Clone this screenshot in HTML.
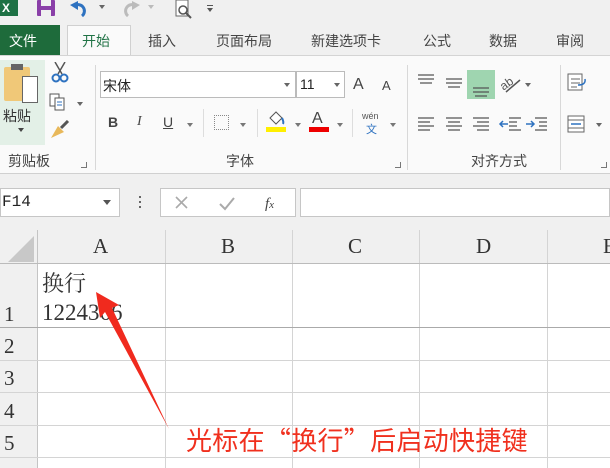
<!DOCTYPE html>
<html><head><meta charset="utf-8"><style>
*{margin:0;padding:0;box-sizing:border-box}
body{width:610px;height:468px;overflow:hidden;background:#f0f0f0;font-family:"Liberation Sans","Noto Sans CJK SC",sans-serif;position:relative;color:#333}
.a{position:absolute}
.tab{position:absolute;top:31px;font-size:14px;color:#444}
.lbl{position:absolute;top:151px;font-size:14px;color:#444}
.sep{position:absolute;top:65px;width:1px;height:105px;background:#d8d8d8}
.hl{position:absolute;left:0;width:610px;height:1px;background:#c8c8c8}
.vl{position:absolute;top:230px;width:1px;height:238px;background:#d4d4d4}
.ch{position:absolute;top:234px;font-family:"Liberation Serif","Noto Serif CJK SC",serif;font-size:21px;color:#333}
.rh{position:absolute;left:4px;font-family:"Liberation Serif","Noto Serif CJK SC",serif;font-size:21px;color:#333}
</style></head><body>
<div class="a" style="left:0;top:0;width:18px;height:16px;background:#1e7145"></div>
<div class="a" style="left:2px;top:1px;color:#fff;font-size:12px;font-weight:bold">X</div>
<div class="a" style="left:37px;top:0;width:18px;height:16px;background:#8a3fa8;border-radius:1px"></div>
<div class="a" style="left:41px;top:0;width:10px;height:6px;background:#f0f0f0"></div>
<div class="a" style="left:41px;top:10px;width:10px;height:6px;background:#f0f0f0"></div>
<svg class="a" style="left:70px;top:0" width="40" height="18"><path d="M4 6 A6 6 0 1 1 12 16" stroke="#2e72c0" stroke-width="3" fill="none"/><path d="M0 5 L8 1 L8 10Z" fill="#2e72c0"/><path d="M29 5 L35 5 L32 9Z" fill="#666"/></svg>
<svg class="a" style="left:120px;top:0" width="40" height="18"><path d="M16 6 A6 6 0 1 0 8 16" stroke="#bbb" stroke-width="3" fill="none"/><path d="M20 5 L12 1 L12 10Z" fill="#bbb"/><path d="M28 5 L34 5 L31 9Z" fill="#bbb"/></svg>
<svg class="a" style="left:174px;top:0" width="20" height="20"><rect x="2" y="0" width="12" height="16" fill="#fff" stroke="#666"/><circle cx="9" cy="10" r="4" fill="none" stroke="#555" stroke-width="1.5"/><path d="M12 13 L17 18" stroke="#555" stroke-width="2"/></svg>
<div class="a" style="left:207px;top:5px;width:6px;height:1px;background:#555"></div>
<div class="a" style="left:207px;top:8px;border-left:3px solid transparent;border-right:3px solid transparent;border-top:4px solid #555"></div>
<div class="a" style="left:0;top:25px;width:60px;height:31px;background:#1e6b3b"></div>
<div class="tab" style="left:9px;color:#fff">文件</div>
<div class="a" style="left:67px;top:25px;width:64px;height:31px;background:#fafafa;border:1px solid #d0d0d0;border-bottom:none"></div>
<div class="tab" style="left:82px;color:#217346">开始</div>
<div class="tab" style="left:148px">插入</div>
<div class="tab" style="left:216px">页面布局</div>
<div class="tab" style="left:311px">新建选项卡</div>
<div class="tab" style="left:423px">公式</div>
<div class="tab" style="left:489px">数据</div>
<div class="tab" style="left:556px">审阅</div>
<div class="a" style="left:0;top:55px;width:610px;height:119px;background:#fafafa;border-top:1px solid #d4d4d4;border-bottom:1px solid #d0d0d0"></div>
<div class="a" style="left:131px;top:55px;width:479px;height:1px;background:#d4d4d4"></div>
<div class="a" style="left:0;top:60px;width:45px;height:85px;background:#e3f0e7"></div>
<div class="a" style="left:4px;top:67px;width:26px;height:34px;background:#f0c878;border-radius:2px"></div>
<div class="a" style="left:11px;top:64px;width:12px;height:6px;background:#666"></div>
<div class="a" style="left:22px;top:76px;width:16px;height:27px;background:#fff;border:1px solid #666"></div>
<div class="a" style="left:3px;top:106px;font-size:14px;color:#333">粘贴</div>
<div class="a" style="left:18px;top:128px;border-left:3px solid transparent;border-right:3px solid transparent;border-top:4px solid #444"></div>
<svg class="a" style="left:50px;top:62px" width="20" height="22"><path d="M5 0 L12 12 M15 0 L8 12" stroke="#555" stroke-width="1.5"/><circle cx="6" cy="16" r="3.5" fill="none" stroke="#2e72c0" stroke-width="2"/><circle cx="14" cy="16" r="3.5" fill="none" stroke="#2e72c0" stroke-width="2"/></svg>
<svg class="a" style="left:49px;top:93px" width="34" height="18"><rect x="1" y="1" width="9" height="12" fill="#fff" stroke="#555"/><rect x="6" y="5" width="9" height="12" fill="#fff" stroke="#555"/><path d="M8 9h5M8 12h5" stroke="#2e72c0"/><path d="M28 9 L34 9 L31 13Z" fill="#666"/></svg>
<svg class="a" style="left:49px;top:120px" width="22" height="20"><path d="M12 8 L19 1" stroke="#555" stroke-width="3"/><path d="M2 18 L9 6 L15 12 Z" fill="#e8b85a"/></svg>
<div class="lbl" style="left:8px">剪贴板</div>
<div class="a" style="left:81px;top:162px;width:6px;height:6px;border-right:1px solid #777;border-bottom:1px solid #777"></div>
<div class="sep" style="left:95px"></div>
<div class="a" style="left:100px;top:71px;width:196px;height:27px;background:#fff;border:1px solid #bbb"></div>
<div class="a" style="left:103px;top:76px;font-size:14px;color:#222">宋体</div>
<div class="a" style="left:284px;top:83px;border-left:3px solid transparent;border-right:3px solid transparent;border-top:4px solid #666"></div>
<div class="a" style="left:296px;top:71px;width:49px;height:27px;background:#fff;border:1px solid #bbb"></div>
<div class="a" style="left:300px;top:76px;font-size:14px;color:#222">11</div>
<div class="a" style="left:334px;top:83px;border-left:3px solid transparent;border-right:3px solid transparent;border-top:4px solid #666"></div>
<div class="a" style="left:353px;top:76px;font-size:16px;color:#444">A</div>
<div class="a" style="left:382px;top:78px;font-size:13px;color:#444">A</div>
<div class="a" style="left:108px;top:114px;font-size:14px;font-weight:bold;color:#444">B</div>
<div class="a" style="left:137px;top:114px;font-size:14px;font-style:italic;font-family:'Liberation Serif',serif;color:#444">I</div>
<div class="a" style="left:163px;top:114px;font-size:14px;text-decoration:underline;color:#444">U</div>
<div class="a" style="left:187px;top:123px;border-left:3px solid transparent;border-right:3px solid transparent;border-top:4px solid #777"></div>
<div class="a" style="left:203px;top:109px;width:1px;height:28px;background:#ddd"></div>
<div class="a" style="left:214px;top:115px;width:15px;height:15px;border:1px dotted #888"></div>
<div class="a" style="left:240px;top:123px;border-left:3px solid transparent;border-right:3px solid transparent;border-top:4px solid #777"></div>
<div class="a" style="left:257px;top:109px;width:1px;height:28px;background:#ddd"></div>
<svg class="a" style="left:266px;top:110px" width="20" height="16"><path d="M4 8 L10 2 L16 8 L10 14Z" fill="#fff" stroke="#555"/><path d="M16 8 Q18 12 17 14" stroke="#2e72c0" stroke-width="2" fill="none"/></svg>
<div class="a" style="left:266px;top:127px;width:20px;height:5px;background:#ffef00"></div>
<div class="a" style="left:295px;top:123px;border-left:3px solid transparent;border-right:3px solid transparent;border-top:4px solid #777"></div>
<div class="a" style="left:312px;top:110px;font-size:16px;color:#444">A</div>
<div class="a" style="left:309px;top:127px;width:20px;height:5px;background:#e00"></div>
<div class="a" style="left:337px;top:123px;border-left:3px solid transparent;border-right:3px solid transparent;border-top:4px solid #777"></div>
<div class="a" style="left:352px;top:109px;width:1px;height:28px;background:#ddd"></div>
<div class="a" style="left:362px;top:111px;font-size:9px;color:#555">wén</div>
<div class="a" style="left:366px;top:121px;font-size:11px;color:#2e72c0">文</div>
<div class="a" style="left:390px;top:123px;border-left:3px solid transparent;border-right:3px solid transparent;border-top:4px solid #777"></div>
<div class="lbl" style="left:226px">字体</div>
<div class="a" style="left:395px;top:162px;width:6px;height:6px;border-right:1px solid #777;border-bottom:1px solid #777"></div>
<div class="sep" style="left:407px"></div>
<div class="a" style="left:467px;top:70px;width:28px;height:29px;background:#9fd5b0"></div>
<svg class="a" style="left:410px;top:70px" width="150" height="70">
<g stroke="#555" stroke-width="1.3">
<path d="M8 5h16M8 9h16M10 13h12"/><path d="M36 9h16M36 13h16M38 17h12"/><path d="M63 18h16M63 22h16M65 26h12"/>
<path d="M8 48h16M8 52h12M8 56h16M8 60h12"/><path d="M36 48h16M38 52h12M36 56h16M38 60h12"/><path d="M63 48h16M67 52h12M63 56h16M67 60h12"/>
<path d="M99 48h12M99 52h8M99 56h8M99 60h12"/><path d="M125 48h12M129 52h8M129 56h8M125 60h12"/>
</g>
<path d="M90 54h8M93 51l-3 3 3 3" stroke="#2e72c0" stroke-width="1.5" fill="none"/>
<path d="M116 54h8M121 51l3 3-3 3" stroke="#2e72c0" stroke-width="1.5" fill="none"/>
<text x="90" y="18" font-size="12" fill="#555" transform="rotate(-35 96 14)" font-family="Liberation Sans">ab</text>
<path d="M96 22 L110 10" stroke="#555" stroke-width="1.5"/>
<path d="M115 13 L121 13 L118 17Z" fill="#666"/>
</svg>
<div class="lbl" style="left:471px">对齐方式</div>
<div class="sep" style="left:560px"></div>
<svg class="a" style="left:566px;top:72px" width="44" height="70"><rect x="2" y="2" width="14" height="16" fill="#fff" stroke="#666"/><path d="M5 7h9M5 11h9M5 15h6" stroke="#666"/><path d="M12 13 q8 0 7-6" stroke="#2e72c0" stroke-width="1.5" fill="none"/><rect x="2" y="44" width="16" height="16" fill="#fff" stroke="#666"/><path d="M2 48h16M2 56h16" stroke="#666"/><path d="M5 52h10" stroke="#2e72c0" stroke-width="1.5"/><path d="M30 51 L36 51 L33 55Z" fill="#666"/></svg>
<div class="a" style="left:601px;top:162px;width:6px;height:6px;border-right:1px solid #777;border-bottom:1px solid #777"></div>
<div class="a" style="left:0;top:188px;width:120px;height:29px;background:#fff;border:1px solid #c6c6c6"></div>
<div class="a" style="left:2px;top:193px;font-family:'Liberation Mono','Noto Serif CJK SC',monospace;font-size:16px;color:#222">F14</div>
<div class="a" style="left:103px;top:200px;border-left:4px solid transparent;border-right:4px solid transparent;border-top:5px solid #555"></div>
<div class="a" style="left:139px;top:196px;width:2px;height:2px;background:#666;box-shadow:0 5px 0 #666,0 10px 0 #666"></div>
<div class="a" style="left:160px;top:188px;width:136px;height:29px;background:#fff;border:1px solid #c6c6c6"></div>
<svg class="a" style="left:170px;top:192px" width="120" height="22"><path d="M6 5l11 11M17 5L6 16" stroke="#aaa" stroke-width="1.6"/><path d="M50 12l5 5 9-11" stroke="#aaa" stroke-width="2" fill="none"/><text x="95" y="16" font-size="15" font-style="italic" font-family="Liberation Serif" fill="#444">f<tspan font-size="11">x</tspan></text></svg>
<div class="a" style="left:300px;top:188px;width:310px;height:29px;background:#fff;border:1px solid #c6c6c6"></div>
<div class="a" style="left:37px;top:263px;width:573px;height:205px;background:#fff"></div>
<div class="a" style="left:0;top:230px;width:610px;height:33px;background:#f0f0f0"></div>
<svg class="a" style="left:8px;top:236px" width="26" height="26"><path d="M26 0 L26 26 L0 26Z" fill="#c8c8c8"/></svg>
<div class="vl" style="left:37px;background:#c4c4c4"></div>
<div class="vl" style="left:165px"></div><div class="vl" style="left:292px"></div><div class="vl" style="left:419px"></div><div class="vl" style="left:547px"></div>
<div class="hl" style="top:263px;background:#bbb"></div>
<div class="hl" style="top:327px;background:#aaa"></div>
<div class="hl" style="top:360px;background:#d4d4d4"></div>
<div class="hl" style="top:392px;background:#d4d4d4"></div>
<div class="hl" style="top:425px;background:#d4d4d4"></div>
<div class="hl" style="top:457px;background:#d4d4d4"></div>
<div class="ch" style="left:93px">A</div><div class="ch" style="left:221px">B</div><div class="ch" style="left:348px">C</div><div class="ch" style="left:476px">D</div><div class="ch" style="left:603px">E</div>
<div class="rh" style="top:302px">1</div><div class="rh" style="top:334px">2</div><div class="rh" style="top:366px">3</div><div class="rh" style="top:399px">4</div><div class="rh" style="top:431px">5</div>
<div class="a" style="left:42px;top:267px;font-family:'Liberation Serif','Noto Serif CJK SC',serif;font-size:22px;color:#333">换行</div>
<div class="a" style="left:42px;top:300px;font-family:'Liberation Serif','Noto Serif CJK SC',serif;font-size:23px;color:#333">1224366</div>
<svg class="a" style="left:0;top:0" width="610" height="468"><path d="M96 292 L119 305 L112 308 L169 429 L105 312 L100 318 Z" fill="#f02a1e"/></svg>
<div class="a" style="left:186px;top:421px;font-family:'Noto Sans CJK SC',sans-serif;font-size:26px;color:#f0301e;letter-spacing:0.3px;white-space:nowrap">光标在“换行”后启动快捷键</div>
</body></html>
